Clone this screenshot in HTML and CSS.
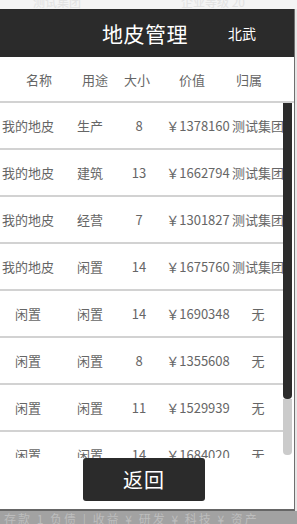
FILE: index.html
```html
<!DOCTYPE html>
<html lang="zh-CN">
  <head>
    <meta charset="UTF-8" />
    <meta name="viewport" content="width=device-width, initial-scale=1.0" />
    <title>地皮管理</title>

    <!-- CSS -->
    <link rel="stylesheet" href="styles.css">
  </head>
  <body>
    <div class="behind-top">
      <span class="ghost g1">测试集团</span>
      <span class="ghost g2">企业等级 20</span>
    </div>

    <div id="dialog">
      <div class="dialog-head">
        <h1>地皮管理</h1>
        <span class="owner">北武</span>
      </div>

      <div class="cols">
        <span>名称</span>
        <span>用途</span>
        <span>大小</span>
        <span>价值</span>
        <span>归属</span>
      </div>

      <div class="list">
        <div class="rows" id="rows"></div>
        <div class="bar">
          <div class="thumb"></div>
          <div class="track"></div>
        </div>
      </div>

      <div class="foot">
        <button class="back">返回</button>
      </div>
    </div>

    <div class="behind-bottom">
      <span class="ghost">存款 1 负债 | 收益 ¥ 研发 ¥ 科技 ¥ 资产</span>
    </div>

    <!-- JS -->
    <script>
      const lands = [
        ["我的地皮", "生产", 8, 1378160, "测试集团"],
        ["我的地皮", "建筑", 13, 1662794, "测试集团"],
        ["我的地皮", "经营", 7, 1301827, "测试集团"],
        ["我的地皮", "闲置", 14, 1675760, "测试集团"],
        ["闲置", "闲置", 14, 1690348, "无"],
        ["闲置", "闲置", 8, 1355608, "无"],
        ["闲置", "闲置", 11, 1529939, "无"],
        ["闲置", "闲置", 14, 1684020, "无"],
      ]

      const rows = document.querySelector("#rows")
      lands.forEach(function (land) {
        const row = document.createElement("div")
        row.className = "row"
        row.innerHTML = `
          <span>${land[0]}</span>
          <span>${land[1]}</span>
          <span>${land[2]}</span>
          <span>￥${land[3]}</span>
          <span>${land[4]}</span>`
        rows.appendChild(row)
      })
    </script>
  </body>
</html>
```

FILE: styles.css
```css
html {
  font-family: "Noto Sans CJK SC", "Noto Sans", sans-serif;
}

body {
  margin: 0;
  width: 297px;
  height: 524px;
  overflow: hidden;
  background-color: #e6e6e6;
}

.behind-top {
  height: 9px;
  overflow: hidden;
  display: flex;
  background-color: #f4f4f4;
}

.ghost {
  color: #e2e2e2;
  font-size: 12px;
  line-height: 12px;
  margin-top: -4px;
  white-space: nowrap;
}

.g1 {
  margin-left: 33px;
}

.g2 {
  margin-left: 100px;
}

#dialog {
  width: 294px;
  background-color: #fff;
  border-right: 1px solid #6f6f6f;
  border-bottom: 2px solid #666;
}

.dialog-head {
  height: 48px;
  display: flex;
  align-items: center;
  padding-left: 102px;
  background-color: #2b2b2b;
  color: #fff;
}

h1 {
  margin: 0;
  font-size: 21px;
  font-weight: normal;
  letter-spacing: 0.5px;
}

.owner {
  margin-left: 40px;
  font-size: 14px;
}

.cols {
  height: 44px;
  display: grid;
  grid-template-columns: 78px 34px 50px 60px 54px;
  align-items: center;
  border-bottom: 2px solid #d2d2d2;
  font-size: 13px;
  color: #666;
}

.cols span,
.row span {
  display: flex;
  justify-content: center;
  white-space: nowrap;
}

.list {
  height: 355px;
  display: flex;
  overflow: hidden;
}

.rows {
  flex: 1;
  overflow: hidden;
}

.row {
  height: 45px;
  display: grid;
  grid-template-columns: 56px 68px 30px 88px 32px;
  align-items: center;
  border-bottom: 2px solid #d2d2d2;
  font-size: 13px;
  color: #666;
}

.bar {
  width: 9px;
  margin-right: 2px;
  display: flex;
  flex-direction: column;
  background-color: #fff;
}

.thumb {
  height: 296px;
  background-color: #2b2b2b;
  border-radius: 0 0 4px 4px;
}

.track {
  height: 56px;
  background-color: #cbcbcb;
  border-radius: 0 0 4px 4px;
}

.foot {
  height: 51px;
  display: flex;
  justify-content: center;
  padding-right: 6px;
}

.back {
  width: 122px;
  height: 43px;
  border: none;
  border-radius: 3px;
  background-color: #2b2b2b;
  color: #fff;
  font-family: inherit;
  font-size: 20px;
  letter-spacing: 1px;
}

.behind-bottom {
  height: 14px;
  overflow: hidden;
  background-color: #a2a2a2;
}

.behind-bottom .ghost {
  display: block;
  margin-top: 2px;
  margin-left: 4px;
  color: #bdbdbd;
  letter-spacing: 2px;
}
```
